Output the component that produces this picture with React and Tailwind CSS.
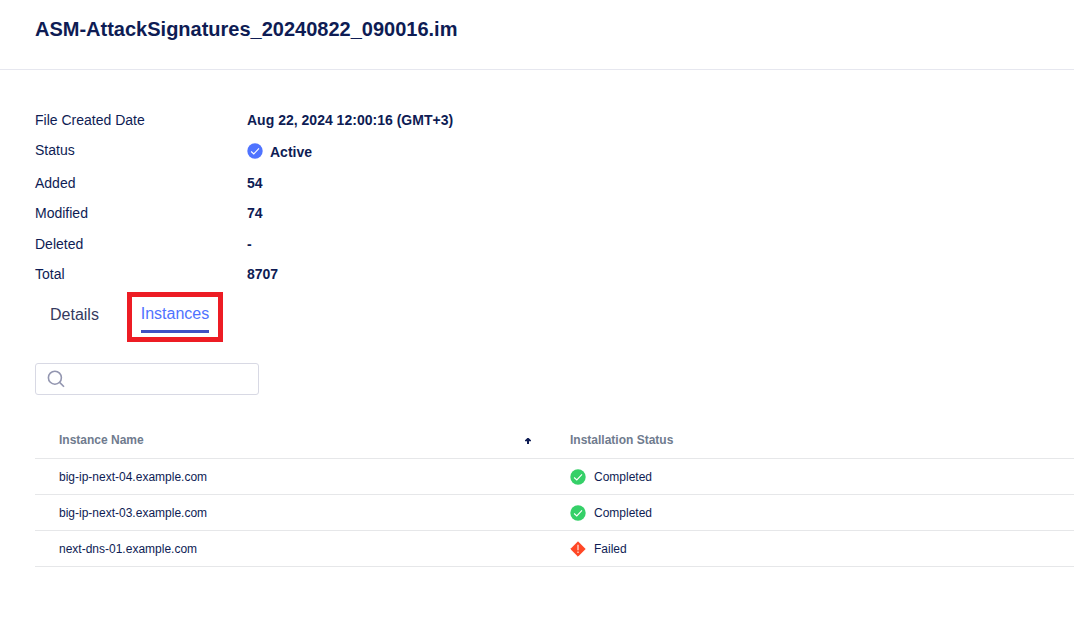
import React from "react";

function CheckCircle({ className }) {
  return (
    <svg viewBox="0 0 16 16" className={`size-4 shrink-0 ${className}`}>
      <circle cx="8" cy="8" r="7.7" fill="currentColor" />
      <path d="M4.1 8.5 L6.8 10.9 L12 5.4" fill="none" stroke="#fff" strokeWidth="1.1" />
    </svg>
  );
}

function FailedIcon() {
  return (
    <svg viewBox="0 0 16 16" className="size-4 shrink-0">
      <path d="M8 0.8 L15.2 8 L8 15.2 L0.8 8 Z" fill="#ff4726" stroke="#ff4726" strokeWidth="1" strokeLinejoin="round" />
      <path d="M8 3.8v5.4M8 10.6v1.5" stroke="#ffc9bf" strokeWidth="1.5" />
    </svg>
  );
}

function Field({ label, className, children }) {
  return (
    <div className={`flex ${className}`}>
      <dt className="w-[212px]">{label}</dt>
      <dd className="font-bold">{children}</dd>
    </div>
  );
}

const instances = [
  { name: "big-ip-next-04.example.com", status: "Completed" },
  { name: "big-ip-next-03.example.com", status: "Completed" },
  { name: "next-dns-01.example.com", status: "Failed" },
];

export default function App() {
  return (
    <div className="h-[641px] w-full overflow-hidden bg-white font-['Liberation_Sans',Arial,sans-serif] text-[#0e1c54]">
      <header className="h-[70px] border-b border-[#e6e7ef] pl-[35px] pt-[17px]">
        <h1 className="text-[20px] font-bold leading-6">ASM-AttackSignatures_20240822_090016.im</h1>
      </header>
      <main className="pl-[35px] pt-[40px]">
        <dl className="text-[14px] leading-5">
          <Field label="File Created Date" className="h-[30px]">
            <span className="tracking-[0.01px]">Aug 22, 2024 12:00:16 (GMT+3)</span>
          </Field>
          <Field label="Status" className="h-[33px]">
            <span className="flex items-start pt-[2px]">
              <CheckCircle className="mt-[1px] text-[#4f73ff]" />
              <span className="ml-[7px]">Active</span>
            </span>
          </Field>
          <Field label="Added" className="h-[30px]">54</Field>
          <Field label="Modified" className="h-[31px]">74</Field>
          <Field label="Deleted" className="h-[30px]">-</Field>
          <Field label="Total" className="h-[28px]">8707</Field>
        </dl>
        <nav className="flex h-[50px] text-[16px] leading-5">
          <button className="flex w-[92px] items-start pl-[15px] pt-[13px] text-[#343a5e]">Details</button>
          <button className="flex h-[50px] w-[96px] items-start justify-center border-[5px] border-[#ed1c24] pt-[7px] text-[#4f73ff]">
            <span className="h-[29px] border-b-[3px] border-[#3f51c4]">Instances</span>
          </button>
        </nav>
        <div className="mt-[21px] flex h-8 w-[224px] items-center rounded-[3px] border border-[#d8d9e4] pl-[11px]">
          <svg viewBox="0 0 18 18" className="size-[18px]" fill="none" stroke="#9396b0" strokeWidth="1.6">
            <circle cx="7.9" cy="7.7" r="6.5" />
            <path d="M12.6 12.4 L17 16.8" />
          </svg>
        </div>
        <table className="mt-[26px] w-full table-fixed border-collapse text-left text-[12px] leading-4">
          <colgroup>
            <col className="w-[511px]" />
            <col />
          </colgroup>
          <thead>
            <tr className="h-[37px] border-b border-[#e6e7e9] text-[#6f7b8e]">
              <th className="pb-0 pl-6 pt-[2px] font-bold">
                <span className="flex items-center justify-between pr-[15px]">
                  Instance Name
                  <svg viewBox="0 0 6 6" className="mt-[2px] size-[6px] text-[#0e1c54]" fill="currentColor">
                    <path d="M2.4 0 H3.6 L6 2.2 V3.2 H4 V6 H2 V3.2 H0 V2.2 Z" />
                  </svg>
                </span>
              </th>
              <th className="pb-0 pl-6 pt-[2px] font-bold">Installation Status</th>
            </tr>
          </thead>
          <tbody>
            {instances.map(({ name, status }) => (
              <tr key={name} className="h-[36px] border-b border-[#e6e7e9]">
                <td className="pb-0 pl-6 pt-[2px]">{name}</td>
                <td className="pb-0 pl-6 pt-[2px]">
                  <span className="flex items-center gap-2">
                    {status === "Completed" ? <CheckCircle className="text-[#35d068]" /> : <FailedIcon />}
                    {status}
                  </span>
                </td>
              </tr>
            ))}
          </tbody>
        </table>
      </main>
    </div>
  );
}
